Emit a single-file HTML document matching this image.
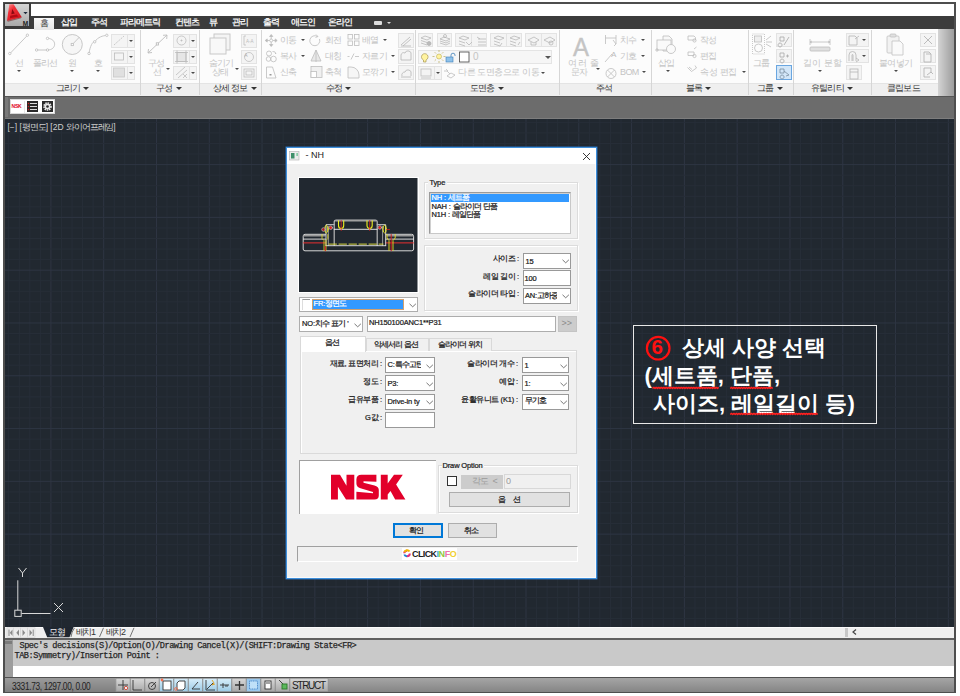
<!DOCTYPE html>
<html><head><meta charset="utf-8">
<style>
*{box-sizing:border-box}
body{margin:0;width:960px;height:696px;background:#fff;position:relative;overflow:hidden;font-family:"Liberation Sans",sans-serif;font-size:9px;color:#000}
.a{position:absolute}
.t{position:absolute;white-space:nowrap;line-height:1}
.tab{color:#fff;font-size:9px;top:18px;letter-spacing:-0.9px;-webkit-text-stroke:0.25px #fff}
.lt{color:#c4c4c4;font-size:9px;letter-spacing:-0.6px}
.pl{color:#3a3a3a;font-size:9px;top:84px;letter-spacing:-0.8px}
.pa{position:absolute;width:0;height:0;border-left:3px solid transparent;border-right:3px solid transparent;border-top:3.5px solid #333;top:86.8px}
.arr{position:absolute;width:0;height:0;border-left:2px solid transparent;border-right:2px solid transparent;border-top:2.5px solid #4a4a4a}
.sb{position:absolute;background:#f4f4f4;border:1px solid #e3e3e3}
.sep{position:absolute;top:30px;width:1px;height:65px;background:#d6d6d6}
.cb{position:absolute;background:#fff;border:1px solid #999}
.gb{position:absolute;border:1px solid #dcdcdc;box-shadow:inset 1px 1px 0 #fff,1px 1px 0 #fff}
.chev{position:absolute;width:5px;height:5px;border-right:1px solid #333;border-bottom:1px solid #333;transform:rotate(45deg)}
.dl{color:#1a1a1a;font-size:8px;letter-spacing:-0.9px;-webkit-text-stroke-width:0.22px}
.k{font-size:8px;letter-spacing:-0.9px}
.dr .k{letter-spacing:-0.55px}
.l{font-size:7.5px;letter-spacing:-0.15px}
.dr{position:absolute;white-space:nowrap;line-height:1;color:#1a1a1a;font-size:8px;letter-spacing:-0.6px;text-align:right;-webkit-text-stroke-width:0.22px}
</style></head><body>

<div class="a" style="left:3px;top:2px;width:952.5px;height:691px;background:#4e4e4e"></div>
<div class="a" style="left:30px;top:3.5px;width:924px;height:12.5px;background:#fff"></div>
<div class="a" style="left:4.5px;top:16px;width:949.5px;height:13px;background:#3c3c3c"></div>
<div class="a" style="left:4.5px;top:3.5px;width:25.5px;height:24px;background:linear-gradient(#d8d8d8,#a0a0a0);border-right:1px solid #666;border-bottom:1px solid #444"></div>
<div class="a" style="left:4.5px;top:29px;width:949.5px;height:66.5px;background:#fcfcfc"></div>
<div class="a" style="left:4.5px;top:82.5px;width:933px;height:13px;background:#efefef;border-top:1px solid #e4e4e4"></div>
<div class="a" style="left:937.5px;top:29px;width:16.5px;height:66.5px;background:linear-gradient(90deg,#d4d4d4,#9c9c9c)"></div>
<div class="a" style="left:4.5px;top:95.5px;width:949.5px;height:23px;background:#6c6c6c;border-top:1px solid #555;border-bottom:1px solid #7d7d7d"></div>
<svg class="a" style="left:4.5px;top:118.5px" width="949.5" height="508"><rect width="949.5" height="508" fill="#212830"/><line x1="3.67" y1="0" x2="3.67" y2="508" stroke="#272e38" stroke-width="1"/><line x1="14.23" y1="0" x2="14.23" y2="508" stroke="#272e38" stroke-width="1"/><line x1="24.78" y1="0" x2="24.78" y2="508" stroke="#272e38" stroke-width="1"/><line x1="35.34" y1="0" x2="35.34" y2="508" stroke="#272e38" stroke-width="1"/><line x1="45.90" y1="0" x2="45.90" y2="508" stroke="#2e3543" stroke-width="1"/><line x1="56.46" y1="0" x2="56.46" y2="508" stroke="#272e38" stroke-width="1"/><line x1="67.02" y1="0" x2="67.02" y2="508" stroke="#272e38" stroke-width="1"/><line x1="77.57" y1="0" x2="77.57" y2="508" stroke="#272e38" stroke-width="1"/><line x1="88.13" y1="0" x2="88.13" y2="508" stroke="#272e38" stroke-width="1"/><line x1="98.69" y1="0" x2="98.69" y2="508" stroke="#2e3543" stroke-width="1"/><line x1="109.25" y1="0" x2="109.25" y2="508" stroke="#272e38" stroke-width="1"/><line x1="119.81" y1="0" x2="119.81" y2="508" stroke="#272e38" stroke-width="1"/><line x1="130.36" y1="0" x2="130.36" y2="508" stroke="#272e38" stroke-width="1"/><line x1="140.92" y1="0" x2="140.92" y2="508" stroke="#272e38" stroke-width="1"/><line x1="151.48" y1="0" x2="151.48" y2="508" stroke="#2e3543" stroke-width="1"/><line x1="162.04" y1="0" x2="162.04" y2="508" stroke="#272e38" stroke-width="1"/><line x1="172.60" y1="0" x2="172.60" y2="508" stroke="#272e38" stroke-width="1"/><line x1="183.15" y1="0" x2="183.15" y2="508" stroke="#272e38" stroke-width="1"/><line x1="193.71" y1="0" x2="193.71" y2="508" stroke="#272e38" stroke-width="1"/><line x1="204.27" y1="0" x2="204.27" y2="508" stroke="#2e3543" stroke-width="1"/><line x1="214.83" y1="0" x2="214.83" y2="508" stroke="#272e38" stroke-width="1"/><line x1="225.39" y1="0" x2="225.39" y2="508" stroke="#272e38" stroke-width="1"/><line x1="235.94" y1="0" x2="235.94" y2="508" stroke="#272e38" stroke-width="1"/><line x1="246.50" y1="0" x2="246.50" y2="508" stroke="#272e38" stroke-width="1"/><line x1="257.06" y1="0" x2="257.06" y2="508" stroke="#2e3543" stroke-width="1"/><line x1="267.62" y1="0" x2="267.62" y2="508" stroke="#272e38" stroke-width="1"/><line x1="278.18" y1="0" x2="278.18" y2="508" stroke="#272e38" stroke-width="1"/><line x1="288.73" y1="0" x2="288.73" y2="508" stroke="#272e38" stroke-width="1"/><line x1="299.29" y1="0" x2="299.29" y2="508" stroke="#272e38" stroke-width="1"/><line x1="309.85" y1="0" x2="309.85" y2="508" stroke="#2e3543" stroke-width="1"/><line x1="320.41" y1="0" x2="320.41" y2="508" stroke="#272e38" stroke-width="1"/><line x1="330.97" y1="0" x2="330.97" y2="508" stroke="#272e38" stroke-width="1"/><line x1="341.52" y1="0" x2="341.52" y2="508" stroke="#272e38" stroke-width="1"/><line x1="352.08" y1="0" x2="352.08" y2="508" stroke="#272e38" stroke-width="1"/><line x1="362.64" y1="0" x2="362.64" y2="508" stroke="#2e3543" stroke-width="1"/><line x1="373.20" y1="0" x2="373.20" y2="508" stroke="#272e38" stroke-width="1"/><line x1="383.76" y1="0" x2="383.76" y2="508" stroke="#272e38" stroke-width="1"/><line x1="394.31" y1="0" x2="394.31" y2="508" stroke="#272e38" stroke-width="1"/><line x1="404.87" y1="0" x2="404.87" y2="508" stroke="#272e38" stroke-width="1"/><line x1="415.43" y1="0" x2="415.43" y2="508" stroke="#2e3543" stroke-width="1"/><line x1="425.99" y1="0" x2="425.99" y2="508" stroke="#272e38" stroke-width="1"/><line x1="436.55" y1="0" x2="436.55" y2="508" stroke="#272e38" stroke-width="1"/><line x1="447.10" y1="0" x2="447.10" y2="508" stroke="#272e38" stroke-width="1"/><line x1="457.66" y1="0" x2="457.66" y2="508" stroke="#272e38" stroke-width="1"/><line x1="468.22" y1="0" x2="468.22" y2="508" stroke="#2e3543" stroke-width="1"/><line x1="478.78" y1="0" x2="478.78" y2="508" stroke="#272e38" stroke-width="1"/><line x1="489.34" y1="0" x2="489.34" y2="508" stroke="#272e38" stroke-width="1"/><line x1="499.89" y1="0" x2="499.89" y2="508" stroke="#272e38" stroke-width="1"/><line x1="510.45" y1="0" x2="510.45" y2="508" stroke="#272e38" stroke-width="1"/><line x1="521.01" y1="0" x2="521.01" y2="508" stroke="#2e3543" stroke-width="1"/><line x1="531.57" y1="0" x2="531.57" y2="508" stroke="#272e38" stroke-width="1"/><line x1="542.13" y1="0" x2="542.13" y2="508" stroke="#272e38" stroke-width="1"/><line x1="552.68" y1="0" x2="552.68" y2="508" stroke="#272e38" stroke-width="1"/><line x1="563.24" y1="0" x2="563.24" y2="508" stroke="#272e38" stroke-width="1"/><line x1="573.80" y1="0" x2="573.80" y2="508" stroke="#2e3543" stroke-width="1"/><line x1="584.36" y1="0" x2="584.36" y2="508" stroke="#272e38" stroke-width="1"/><line x1="594.92" y1="0" x2="594.92" y2="508" stroke="#272e38" stroke-width="1"/><line x1="605.47" y1="0" x2="605.47" y2="508" stroke="#272e38" stroke-width="1"/><line x1="616.03" y1="0" x2="616.03" y2="508" stroke="#272e38" stroke-width="1"/><line x1="626.59" y1="0" x2="626.59" y2="508" stroke="#2e3543" stroke-width="1"/><line x1="637.15" y1="0" x2="637.15" y2="508" stroke="#272e38" stroke-width="1"/><line x1="647.71" y1="0" x2="647.71" y2="508" stroke="#272e38" stroke-width="1"/><line x1="658.26" y1="0" x2="658.26" y2="508" stroke="#272e38" stroke-width="1"/><line x1="668.82" y1="0" x2="668.82" y2="508" stroke="#272e38" stroke-width="1"/><line x1="679.38" y1="0" x2="679.38" y2="508" stroke="#2e3543" stroke-width="1"/><line x1="689.94" y1="0" x2="689.94" y2="508" stroke="#272e38" stroke-width="1"/><line x1="700.50" y1="0" x2="700.50" y2="508" stroke="#272e38" stroke-width="1"/><line x1="711.05" y1="0" x2="711.05" y2="508" stroke="#272e38" stroke-width="1"/><line x1="721.61" y1="0" x2="721.61" y2="508" stroke="#272e38" stroke-width="1"/><line x1="732.17" y1="0" x2="732.17" y2="508" stroke="#2e3543" stroke-width="1"/><line x1="742.73" y1="0" x2="742.73" y2="508" stroke="#272e38" stroke-width="1"/><line x1="753.29" y1="0" x2="753.29" y2="508" stroke="#272e38" stroke-width="1"/><line x1="763.84" y1="0" x2="763.84" y2="508" stroke="#272e38" stroke-width="1"/><line x1="774.40" y1="0" x2="774.40" y2="508" stroke="#272e38" stroke-width="1"/><line x1="784.96" y1="0" x2="784.96" y2="508" stroke="#2e3543" stroke-width="1"/><line x1="795.52" y1="0" x2="795.52" y2="508" stroke="#272e38" stroke-width="1"/><line x1="806.08" y1="0" x2="806.08" y2="508" stroke="#272e38" stroke-width="1"/><line x1="816.63" y1="0" x2="816.63" y2="508" stroke="#272e38" stroke-width="1"/><line x1="827.19" y1="0" x2="827.19" y2="508" stroke="#272e38" stroke-width="1"/><line x1="837.75" y1="0" x2="837.75" y2="508" stroke="#2e3543" stroke-width="1"/><line x1="848.31" y1="0" x2="848.31" y2="508" stroke="#272e38" stroke-width="1"/><line x1="858.87" y1="0" x2="858.87" y2="508" stroke="#272e38" stroke-width="1"/><line x1="869.42" y1="0" x2="869.42" y2="508" stroke="#272e38" stroke-width="1"/><line x1="879.98" y1="0" x2="879.98" y2="508" stroke="#272e38" stroke-width="1"/><line x1="890.54" y1="0" x2="890.54" y2="508" stroke="#2e3543" stroke-width="1"/><line x1="901.10" y1="0" x2="901.10" y2="508" stroke="#272e38" stroke-width="1"/><line x1="911.66" y1="0" x2="911.66" y2="508" stroke="#272e38" stroke-width="1"/><line x1="922.21" y1="0" x2="922.21" y2="508" stroke="#272e38" stroke-width="1"/><line x1="932.77" y1="0" x2="932.77" y2="508" stroke="#272e38" stroke-width="1"/><line x1="943.33" y1="0" x2="943.33" y2="508" stroke="#2e3543" stroke-width="1"/><line x1="0" y1="3.37" x2="949.5" y2="3.37" stroke="#272e38" stroke-width="1"/><line x1="0" y1="13.93" x2="949.5" y2="13.93" stroke="#272e38" stroke-width="1"/><line x1="0" y1="24.48" x2="949.5" y2="24.48" stroke="#272e38" stroke-width="1"/><line x1="0" y1="35.04" x2="949.5" y2="35.04" stroke="#272e38" stroke-width="1"/><line x1="0" y1="45.60" x2="949.5" y2="45.60" stroke="#2e3543" stroke-width="1"/><line x1="0" y1="56.16" x2="949.5" y2="56.16" stroke="#272e38" stroke-width="1"/><line x1="0" y1="66.72" x2="949.5" y2="66.72" stroke="#272e38" stroke-width="1"/><line x1="0" y1="77.27" x2="949.5" y2="77.27" stroke="#272e38" stroke-width="1"/><line x1="0" y1="87.83" x2="949.5" y2="87.83" stroke="#272e38" stroke-width="1"/><line x1="0" y1="98.39" x2="949.5" y2="98.39" stroke="#2e3543" stroke-width="1"/><line x1="0" y1="108.95" x2="949.5" y2="108.95" stroke="#272e38" stroke-width="1"/><line x1="0" y1="119.51" x2="949.5" y2="119.51" stroke="#272e38" stroke-width="1"/><line x1="0" y1="130.06" x2="949.5" y2="130.06" stroke="#272e38" stroke-width="1"/><line x1="0" y1="140.62" x2="949.5" y2="140.62" stroke="#272e38" stroke-width="1"/><line x1="0" y1="151.18" x2="949.5" y2="151.18" stroke="#2e3543" stroke-width="1"/><line x1="0" y1="161.74" x2="949.5" y2="161.74" stroke="#272e38" stroke-width="1"/><line x1="0" y1="172.30" x2="949.5" y2="172.30" stroke="#272e38" stroke-width="1"/><line x1="0" y1="182.85" x2="949.5" y2="182.85" stroke="#272e38" stroke-width="1"/><line x1="0" y1="193.41" x2="949.5" y2="193.41" stroke="#272e38" stroke-width="1"/><line x1="0" y1="203.97" x2="949.5" y2="203.97" stroke="#2e3543" stroke-width="1"/><line x1="0" y1="214.53" x2="949.5" y2="214.53" stroke="#272e38" stroke-width="1"/><line x1="0" y1="225.09" x2="949.5" y2="225.09" stroke="#272e38" stroke-width="1"/><line x1="0" y1="235.64" x2="949.5" y2="235.64" stroke="#272e38" stroke-width="1"/><line x1="0" y1="246.20" x2="949.5" y2="246.20" stroke="#272e38" stroke-width="1"/><line x1="0" y1="256.76" x2="949.5" y2="256.76" stroke="#2e3543" stroke-width="1"/><line x1="0" y1="267.32" x2="949.5" y2="267.32" stroke="#272e38" stroke-width="1"/><line x1="0" y1="277.88" x2="949.5" y2="277.88" stroke="#272e38" stroke-width="1"/><line x1="0" y1="288.43" x2="949.5" y2="288.43" stroke="#272e38" stroke-width="1"/><line x1="0" y1="298.99" x2="949.5" y2="298.99" stroke="#272e38" stroke-width="1"/><line x1="0" y1="309.55" x2="949.5" y2="309.55" stroke="#2e3543" stroke-width="1"/><line x1="0" y1="320.11" x2="949.5" y2="320.11" stroke="#272e38" stroke-width="1"/><line x1="0" y1="330.67" x2="949.5" y2="330.67" stroke="#272e38" stroke-width="1"/><line x1="0" y1="341.22" x2="949.5" y2="341.22" stroke="#272e38" stroke-width="1"/><line x1="0" y1="351.78" x2="949.5" y2="351.78" stroke="#272e38" stroke-width="1"/><line x1="0" y1="362.34" x2="949.5" y2="362.34" stroke="#2e3543" stroke-width="1"/><line x1="0" y1="372.90" x2="949.5" y2="372.90" stroke="#272e38" stroke-width="1"/><line x1="0" y1="383.46" x2="949.5" y2="383.46" stroke="#272e38" stroke-width="1"/><line x1="0" y1="394.01" x2="949.5" y2="394.01" stroke="#272e38" stroke-width="1"/><line x1="0" y1="404.57" x2="949.5" y2="404.57" stroke="#272e38" stroke-width="1"/><line x1="0" y1="415.13" x2="949.5" y2="415.13" stroke="#2e3543" stroke-width="1"/><line x1="0" y1="425.69" x2="949.5" y2="425.69" stroke="#272e38" stroke-width="1"/><line x1="0" y1="436.25" x2="949.5" y2="436.25" stroke="#272e38" stroke-width="1"/><line x1="0" y1="446.80" x2="949.5" y2="446.80" stroke="#272e38" stroke-width="1"/><line x1="0" y1="457.36" x2="949.5" y2="457.36" stroke="#272e38" stroke-width="1"/><line x1="0" y1="467.92" x2="949.5" y2="467.92" stroke="#2e3543" stroke-width="1"/><line x1="0" y1="478.48" x2="949.5" y2="478.48" stroke="#272e38" stroke-width="1"/><line x1="0" y1="489.04" x2="949.5" y2="489.04" stroke="#272e38" stroke-width="1"/><line x1="0" y1="499.59" x2="949.5" y2="499.59" stroke="#272e38" stroke-width="1"/></svg>
<div class="a" style="left:4.5px;top:626.5px;width:949.5px;height:11px;background:#efefef"></div>
<div class="a" style="left:4.5px;top:637.5px;width:949.5px;height:2.5px;background:#606060"></div>
<div class="a" style="left:4.5px;top:640px;width:949.5px;height:25.5px;background:#c9c9c9"></div>
<div class="a" style="left:13px;top:665.5px;width:941px;height:11.5px;background:#fff"></div>
<div class="a" style="left:4.5px;top:640px;width:8.5px;height:37px;background:#9d9d9d"></div>
<div class="a" style="left:4.5px;top:677px;width:949.5px;height:15px;background:linear-gradient(#a5a5a5,#858585);border-top:1px solid #505050"></div>
<!-- app logo -->
<div class="a" style="left:3.5px;top:2.5px;width:27.5px;height:26px;background:#3a3a3a"></div>
<div class="a" style="left:5px;top:4px;width:24px;height:21.5px;background:linear-gradient(#d6d6d6,#a9a9a9)"></div>
<svg class="a" style="left:4.5px;top:3.5px" width="26" height="25">
<defs><linearGradient id="rg" x1="0" y1="0" x2="0.8" y2="1"><stop offset="0" stop-color="#ff9a9a"/><stop offset="0.35" stop-color="#f23038"/><stop offset="1" stop-color="#d0101a"/></linearGradient></defs>
<path d="M4.3,0.3 L8.6,0.3 L16.8,13.2 L2,16.8 Z" fill="url(#rg)"/>
<path d="M2,16.8 L16.8,13.2 L15.5,14.5 L3,17.8 Z" fill="#6a1010" opacity="0.5"/>
<path d="M7.2,5 L9.8,9.6 L6.3,10.2 Z" fill="#8a0a12"/>
<path d="M5.2,11.8 L11.8,10.6 L13.3,12.6 L5,14.2 Z" fill="#b00a14"/>
<path d="M18.4,8 L22.6,8 L20.5,10.2 Z" fill="#1e2a3a"/>
</svg>
<div class="t" style="left:22.8px;top:20.5px;font-size:6.5px;font-weight:bold;color:#222">M</div>
<!-- active tab -->
<div class="a" style="left:34px;top:17.5px;width:20px;height:12px;background:linear-gradient(#f8f8f8,#e6e6e6)"></div>
<div class="t tab" style="left:39.5px;top:18.5px;color:#333;-webkit-text-stroke:0">홈</div>
<div class="t tab" style="left:61px">삽입</div>
<div class="t tab" style="left:90.5px">주석</div>
<div class="t tab" style="left:120px">파라메트릭</div>
<div class="t tab" style="left:174.5px">컨텐츠</div>
<div class="t tab" style="left:208.5px">뷰</div>
<div class="t tab" style="left:232px">관리</div>
<div class="t tab" style="left:262.5px">출력</div>
<div class="t tab" style="left:291px">애드인</div>
<div class="t tab" style="left:328px">온라인</div>
<div class="a" style="left:374px;top:20.5px;width:8px;height:4px;background:#ddd;border-radius:1px"></div>
<div class="arr" style="left:386.5px;top:22px;border-top-color:#ddd;border-left-width:2px;border-right-width:2px;border-top-width:2px"></div>
<!-- separators -->
<div class="sep" style="left:139.5px"></div>
<div class="sep" style="left:198.5px"></div>
<div class="sep" style="left:260.5px"></div>
<div class="sep" style="left:415px"></div>
<div class="sep" style="left:558.5px"></div>
<div class="sep" style="left:650.5px"></div>
<div class="sep" style="left:748px"></div>
<div class="sep" style="left:793px"></div>
<div class="sep" style="left:870.5px"></div>
<!-- panel labels -->
<div class="t pl" style="left:56px">그리기</div><div class="pa" style="left:82.5px"></div>
<div class="t pl" style="left:156px">구성</div><div class="pa" style="left:175.5px"></div>
<div class="t pl" style="left:213px">상세 정보</div><div class="pa" style="left:251.0px"></div>
<div class="t pl" style="left:326px">수정</div><div class="pa" style="left:344.5px"></div>
<div class="t pl" style="left:470px">도면층</div><div class="pa" style="left:497.5px"></div>
<div class="t pl" style="left:596px">주석</div>
<div class="t pl" style="left:686px">블록</div><div class="pa" style="left:705.0px"></div>
<div class="t pl" style="left:757px">그룹</div><div class="pa" style="left:776.5px"></div>
<div class="t pl" style="left:811px">유틸리티</div><div class="pa" style="left:846.5px"></div>
<div class="t pl" style="left:887px">클립보드</div>

<!-- 그리기 panel -->
<svg class="a" style="left:0;top:28px" width="140" height="54" fill="none" stroke="#c2c2c2" stroke-width="0.9">
<line x1="10.5" y1="25" x2="26.8" y2="8"/><circle cx="9.8" cy="25.5" r="1.2" fill="#fff"/><circle cx="27.4" cy="7.2" r="1.2" fill="#fff"/>
<path d="M36.6,22 L47.5,22 C57,22 57,10.4 47.5,10.4"/><circle cx="36.6" cy="22" r="1.2" fill="#fff"/><circle cx="47.5" cy="22" r="1.2" fill="#fff"/><circle cx="47.5" cy="10.4" r="1.2" fill="#fff"/>
<circle cx="72.3" cy="16.5" r="10" fill="#f6f6f6"/><rect x="71.2" y="15.4" width="2.2" height="2.2" fill="#fff"/><line x1="73.4" y1="15.4" x2="79.5" y2="9"/>
<path d="M89,25.5 C90,18 93,13 94.7,13.8 C98,9 103,7.5 106.8,7.5"/><circle cx="89" cy="25.5" r="1.2" fill="#fff"/><circle cx="94.7" cy="13.8" r="1.2" fill="#fff"/><circle cx="106.8" cy="7.3" r="1.2" fill="#fff"/>
</svg>
<div class="t lt" style="left:14.5px;top:58.5px">선</div>
<div class="t lt" style="left:33px;top:58.5px;letter-spacing:-1px">폴리선</div>
<div class="t lt" style="left:68px;top:58.5px">원</div>
<div class="t lt" style="left:93.5px;top:58.5px">호</div>
<div class="arr" style="left:16.5px;top:70px"></div>
<div class="arr" style="left:70px;top:70px"></div>
<div class="arr" style="left:95.5px;top:70px"></div>
<div class="sb" style="left:111px;top:33.5px;width:24px;height:14px"></div><div class="a" style="left:127px;top:34px;width:1px;height:13px;background:#e3e3e3"></div><div class="arr" style="left:129px;top:40px"></div>
<div class="sb" style="left:111px;top:49.5px;width:24px;height:14px"></div><div class="a" style="left:127px;top:50px;width:1px;height:13px;background:#e3e3e3"></div><div class="arr" style="left:129px;top:56px"></div>
<div class="sb" style="left:111px;top:65.5px;width:24px;height:14px"></div><div class="a" style="left:127px;top:66px;width:1px;height:13px;background:#e3e3e3"></div><div class="arr" style="left:129px;top:72px"></div>
<svg class="a" style="left:111px;top:33px" width="17" height="48" fill="none" stroke="#bcbcbc" stroke-width="0.8">
<line x1="3" y1="12" x2="13" y2="3" stroke-dasharray="2,1"/>
<rect x="3.5" y="20" width="9" height="7"/><rect x="2.5" y="35" width="11" height="9" fill="#e0e0e0" stroke="#c8c8c8"/>
</svg>

<!-- 구성 panel -->
<svg class="a" style="left:140px;top:28px" width="60" height="54" fill="none" stroke="#bdbdbd" stroke-width="0.9">
<line x1="8" y1="25" x2="27" y2="7"/><path d="M8,25 l0.5,-4 M8,25 l4,-0.5 M27,7 l-4,0.3 M27,7 l-0.3,4"/><rect x="16.3" y="14.8" width="2.2" height="2.2" fill="#fff"/>
</svg>
<div class="t lt" style="left:147.5px;top:58.5px;letter-spacing:-0.8px">구성</div>
<div class="t lt" style="left:152.5px;top:67.5px">선</div>
<div class="arr" style="left:166px;top:68px"></div>
<div class="sb" style="left:173px;top:33.5px;width:24px;height:14px"></div><div class="a" style="left:189px;top:34px;width:1px;height:13px;background:#e3e3e3"></div><div class="arr" style="left:191px;top:40px"></div>
<div class="sb" style="left:173px;top:49.5px;width:24px;height:14px"></div><div class="a" style="left:189px;top:50px;width:1px;height:13px;background:#e3e3e3"></div><div class="arr" style="left:191px;top:56px"></div>
<div class="sb" style="left:173px;top:65.5px;width:24px;height:14px"></div><div class="a" style="left:189px;top:66px;width:1px;height:13px;background:#e3e3e3"></div><div class="arr" style="left:191px;top:72px"></div>
<svg class="a" style="left:173px;top:33px" width="17" height="48" fill="none" stroke="#bcbcbc" stroke-width="0.8">
<circle cx="8.5" cy="7.5" r="4.5"/><circle cx="8.5" cy="7.5" r="0.6" fill="#bbb"/>
<rect x="4" y="19.5" width="9" height="9" fill="#e6e6e6"/><path d="M2,19.5h13M2,28.5h13M4,17.5v13M13,17.5v13"/>
<path d="M3,42 l9,-8 M5,45 l9,-8 M10,41 l4,4 M14,41 l-4,4"/>
</svg>

<!-- 상세 정보 panel -->
<svg class="a" style="left:199px;top:28px" width="62" height="54" fill="none" stroke="#c4c4c4" stroke-width="0.9">
<rect x="15" y="6" width="16" height="16" fill="#f4f4f4"/><rect x="11" y="10" width="16" height="16" fill="#f8f8f8"/>
</svg>
<div class="t lt" style="left:208.5px;top:58.5px;letter-spacing:-0.6px">숨기기</div>
<div class="t lt" style="left:212px;top:67.5px;letter-spacing:-0.6px">상태</div>
<div class="arr" style="left:234.5px;top:68px"></div>
<div class="sb" style="left:241px;top:33.5px;width:16px;height:14px"></div>
<div class="sb" style="left:241px;top:49.5px;width:16px;height:14px"></div>
<div class="sb" style="left:241px;top:65.5px;width:16px;height:14px"></div>
<svg class="a" style="left:241px;top:33px" width="16" height="48" fill="none" stroke="#b8b8b8" stroke-width="0.7">
<path d="M3,3v9M3,3h2M3,12h2"/><text x="5" y="10" font-size="4.5" fill="#bbb" stroke="none" font-family="Liberation Sans">A-A</text>
<circle cx="8" cy="24" r="4.5"/><text x="3.5" y="24" font-size="4.5" fill="#aaa" stroke="none" font-family="Liberation Sans">A</text>
<rect x="3" y="36" width="10" height="8"/><rect x="5" y="38" width="6" height="4"/>
</svg>

<!-- 수정 panel -->
<svg class="a" style="left:262px;top:28px" width="155" height="54" fill="none" stroke="#bdbdbd" stroke-width="0.8">
<path d="M9.2,7.5v10M4.2,12.5h10"/><path d="M9.2,6.5 l-1.6,2 h3.2z M9.2,18.5 l-1.6,-2 h3.2z M3.2,12.5 l2,-1.6 v3.2z M15.2,12.5 l-2,-1.6 v3.2z" fill="#bbb"/><circle cx="9.2" cy="12.5" r="1.5" fill="#fff"/>
<circle cx="7" cy="25.5" r="2.5"/><circle cx="6.5" cy="31" r="2.3"/><circle cx="11.5" cy="31" r="2.8"/><path d="M10.5,23.5 q3,-0.5 3.5,2.5 l-1,-1"/>
<path d="M4.5,39 h6 l3.5,11 h-9.5 z"/><rect x="7.5" y="46" width="2" height="1.5" fill="#999" stroke="none"/>
<path d="M55.5,8.5 A5,5 0 1 0 57.5,11"/><path d="M54,6.5 l2,2 l-2.5,1" />
<path d="M54,22 l-5,11 h10 z" fill="#e8e8e8"/><path d="M54,22 v12"/>
<rect x="49" y="38.5" width="11" height="11" fill="#f0f0f0"/><rect x="49" y="43.5" width="5.5" height="6" fill="#fff"/>
<rect x="86" y="6.5" width="4.5" height="4.5"/><rect x="92.5" y="6.5" width="4.5" height="4.5"/><rect x="86" y="13" width="4.5" height="4.5"/><rect x="92.5" y="13" width="4.5" height="4.5"/>
<path d="M85.5,28.5 h2 M92,25.5 l-3,6 M93,28.5 h4" />
<path d="M86,39 v11 h11 v-3 a8,8 0 0 0 -8,-8 z" fill="#f6f6f6"/>
</svg>
<div class="t lt" style="left:279.5px;top:35.5px">이동</div><div class="arr" style="left:300.5px;top:39px"></div>
<div class="t lt" style="left:279.5px;top:51.5px">복사</div><div class="arr" style="left:300.5px;top:55px"></div>
<div class="t lt" style="left:279.5px;top:67.5px">신축</div>
<div class="t lt" style="left:324.5px;top:35.5px">회전</div>
<div class="t lt" style="left:324.5px;top:51.5px">대칭</div>
<div class="t lt" style="left:324.5px;top:67.5px">축척</div>
<div class="t lt" style="left:361.5px;top:35.5px">배열</div><div class="arr" style="left:383px;top:39px"></div>
<div class="t lt" style="left:361.5px;top:51.5px;letter-spacing:-0.3px">자르기</div><div class="arr" style="left:391px;top:55px"></div>
<div class="t lt" style="left:361.5px;top:67.5px;letter-spacing:-0.3px">모깎기</div><div class="arr" style="left:391px;top:71px"></div>
<div class="sb" style="left:398px;top:33px;width:15.5px;height:15px"></div>
<div class="sb" style="left:398px;top:49px;width:15.5px;height:15px"></div>
<div class="sb" style="left:398px;top:65px;width:15.5px;height:15px"></div>
<svg class="a" style="left:398px;top:33px" width="16" height="48" fill="none" stroke="#b5b5b5" stroke-width="0.8">
<path d="M3,12 l9,-8 M5,13 l8,-7 M3,13 h10"/><path d="M3,22 a3,3 0 0 1 4,-2 a3,3 0 0 1 6,2 v5 h-10 z"/><path d="M3,44 h10 M4,43 a3,3 0 0 1 3,-4 a3,3 0 0 1 6,2 v2"/>
</svg>

<!-- 도면층 panel -->
<div class="sb" style="left:418px;top:33px;width:15px;height:14px"></div>
<div class="sb" style="left:436.5px;top:33px;width:15.5px;height:14px"></div>
<div class="sb" style="left:455px;top:33px;width:32px;height:14px"></div><div class="a" style="left:471px;top:34px;width:1px;height:12px;background:#e3e3e3"></div>
<div class="sb" style="left:490px;top:33px;width:32px;height:14px"></div><div class="a" style="left:506px;top:34px;width:1px;height:12px;background:#e3e3e3"></div>
<div class="sb" style="left:525px;top:33px;width:32px;height:14px"></div><div class="a" style="left:541px;top:34px;width:1px;height:12px;background:#e3e3e3"></div>
<svg class="a" style="left:418px;top:33px" width="140" height="14" fill="none" stroke="#b0b0b0" stroke-width="0.7">
<path d="M3,5 l4,-2 l6,2 l-4,2 z M3,7.5 l6,2 M3,10 l6,2"/><circle cx="11" cy="10.5" r="2" fill="#bbb"/>
<path d="M22,6 l4,-2 l6,2 l-4,2 z M22,8 l6,2 l4,-2 M22,10 l6,2 l4,-2"/><circle cx="27" cy="3" r="1.5"/>
<path d="M41,5 l4,-2 l6,2 l-4,2 z M41,8 l6,2 M41,11 l6,2"/><path d="M48,9 l3,3 l3,-3"/>
<path d="M59,4 l3,2 M60,6 h8 M60,9 h8 M60,12 h8"/>
<path d="M76,5 l4,-2 l6,2 l-4,2 z M76,8 l6,2 M76,11 l6,2"/><path d="M84,10 l-2,3"/>
<path d="M92,5 l4,-2 l6,2 l-4,2 z M92,8 l6,2 M92,11 l6,2"/><path d="M100,12 l2,-3"/>
<path d="M110,7 l6,-3 l5,3 l-5,3 z"/><path d="M113,9 v3 h5 v-3"/>
<path d="M126,7 l6,-3 l5,3 l-5,3 z"/><circle cx="133" cy="10" r="2"/>
</svg>
<div class="a" style="left:418px;top:49.5px;width:134px;height:14.5px;background:#f6f6f6;border:1px solid #e4e4e4"></div>
<svg class="a" style="left:418px;top:49px" width="134" height="16">
<path d="M5.5,11 a3.3,3.3 0 1 1 2.5,0 v2 h-2.5 z" fill="#fff3a0" stroke="#9c8a40" stroke-width="0.6"/>
<circle cx="21" cy="7.5" r="2.5" fill="#fff3a0" stroke="#b0a040" stroke-width="0.5"/><path d="M21,3v-2M21,12v2M16.5,7.5h-2M25.5,7.5h2M18,4.5l-1.3,-1.3M24,10.5l1.3,1.3M18,10.5l-1.3,1.3M24,4.5l1.3,-1.3" stroke="#b0a040" stroke-width="0.6"/>
<rect x="28" y="8" width="7" height="5" fill="#8ec1ea" stroke="#3f7fb8" stroke-width="0.6"/><path d="M33,8 v-1.8 a2,2 0 0 1 4,0 v0.8" fill="none" stroke="#3f7fb8" stroke-width="0.8"/>
<rect x="41.5" y="3" width="9.5" height="10" fill="#fff" stroke="#555" stroke-width="0.9"/>
</svg>
<div class="t" style="left:473px;top:51.5px;font-size:10px;color:#c4c4c4">0</div>
<div class="arr" style="left:545px;top:55.5px;border-top-color:#555;border-left-width:3px;border-right-width:3px;border-top-width:3.5px"></div>
<div class="sb" style="left:418px;top:65.5px;width:24px;height:14.5px"></div><div class="a" style="left:433.5px;top:66px;width:1px;height:13px;background:#e3e3e3"></div><div class="arr" style="left:436px;top:72px"></div>
<svg class="a" style="left:418px;top:65px" width="40" height="16" fill="none" stroke="#bdbdbd" stroke-width="0.8">
<rect x="3" y="4" width="10" height="7"/><path d="M3,13 h10"/>
<path d="M28,4 l2,2 M26,6 h3 l3,3 M29,11 l4,-3 l4,2 l-4,3 z"/>
</svg>
<div class="t lt" style="left:458px;top:67.5px;letter-spacing:-0.45px">다른 도면층으로 이동</div>
<div class="arr" style="left:541px;top:72px;border-left-width:2px;border-right-width:2px;border-top-width:2.5px"></div>

<!-- 주석 panel -->
<div class="t" style="left:572.5px;top:33.5px;font-size:26px;color:#c4c4c4;transform:scaleX(0.92);transform-origin:left;-webkit-text-stroke:0.4px #c4c4c4">A</div>
<div class="t lt" style="left:568px;top:58.5px;letter-spacing:0.5px">여러 줄</div>
<div class="t lt" style="left:571px;top:67.5px">문자</div>
<div class="arr" style="left:596px;top:68px"></div>
<svg class="a" style="left:603px;top:33px" width="16" height="48" fill="none" stroke="#bdbdbd" stroke-width="0.8">
<path d="M2.5,2v9M13,2v9M2.5,5h10.5M10,7 l3,4 l-2,2"/>
<path d="M2,29 l7,-8"/><text x="8" y="24" font-size="8" fill="#bbb" stroke="none" font-family="Liberation Sans">A</text>
<circle cx="8" cy="40.5" r="5"/><path d="M4.5,37 l7,7 M11.5,37 l-7,7"/>
</svg>
<div class="t lt" style="left:620px;top:35.5px">치수</div><div class="arr" style="left:640.5px;top:39px"></div>
<div class="t lt" style="left:620px;top:51.5px">기호</div><div class="arr" style="left:640.5px;top:55px"></div>
<div class="t lt" style="left:620px;top:68px;font-size:9px">BOM</div><div class="arr" style="left:642px;top:71px"></div>

<!-- 블록 panel -->
<svg class="a" style="left:652px;top:28px" width="96" height="54" fill="none" stroke="#bdbdbd" stroke-width="0.8">
<path d="M11,8 h6 l3,3 v12 h-9 z" fill="#f8f8f8"/><rect x="5" y="12" width="14" height="10" fill="#fafafa"/><circle cx="19" cy="21" r="4.5" fill="#fafafa"/><circle cx="5" cy="22" r="1.2"/>
<path d="M36,8 h6 l1.5,1.5 v2.5 h-7.5 z"/><circle cx="42.5" cy="12.5" r="1.6"/>
<path d="M36,24 h6 v3.5 h-6 z M42,21 l2.5,-2"/><circle cx="42.5" cy="28" r="1.6"/>
<path d="M35.5,39.5 l4,4 l5,-3.5 l-1.5,-2.5 M37,39 l3,2.5"/>
</svg>
<div class="t lt" style="left:658px;top:58.5px">삽입</div>
<div class="arr" style="left:665.5px;top:70px"></div>
<div class="t lt" style="left:700px;top:35.5px">작성</div>
<div class="t lt" style="left:700px;top:51.5px">편집</div>
<div class="t lt" style="left:700px;top:67.5px;letter-spacing:-0.3px">속성 편집</div><div class="arr" style="left:742px;top:71px"></div>

<!-- 그룹 panel -->
<svg class="a" style="left:750px;top:28px" width="44" height="54" fill="none" stroke="#bdbdbd" stroke-width="0.8">
<rect x="2.5" y="6" width="12" height="20" stroke-dasharray="1,1"/><rect x="4.5" y="8" width="7" height="6" fill="#eee"/><circle cx="8.5" cy="20" r="4"/><path d="M16,12 l5,-4 M16,14 h6 M16,16 l5,3"/>
</svg>
<div class="t lt" style="left:753px;top:58.5px">그룹</div>
<div class="sb" style="left:776px;top:33px;width:15.5px;height:14px"></div>
<div class="sb" style="left:776px;top:49px;width:15.5px;height:14px"></div>
<div class="a" style="left:776px;top:65px;width:15.5px;height:15px;background:#d2e6f8;border:1px solid #6aa6e0"></div>
<svg class="a" style="left:776px;top:33px" width="16" height="48" fill="none" stroke="#a8a8a8" stroke-width="0.8">
<path d="M4,4 h4 v4 h-4z M4,10 a2,2 0 1 0 0.1,0 M8,12 l5,-8"/>
<path d="M4,20 h4 v4 h-4z M6,26 a2,2 0 1 0 0.1,0 M10,23 h3 M11.5,21.5 v3"/>
<path d="M4,36 h4 v4 h-4z M6,42 a2,2 0 1 0 0.1,0 M8,38 l5,4 l-3,1" stroke="#7a8ea0"/>
</svg>

<!-- 유틸리티 panel -->
<svg class="a" style="left:800px;top:28px" width="70" height="54" fill="none" stroke="#bdbdbd" stroke-width="0.8">
<path d="M10,11 v6 M30,11 v6 M10,14 h20 M10,14 l2,-1 M10,14 l2,1 M30,14 l-2,-1 M30,14 l-2,1"/>
<rect x="10" y="19" width="20" height="4" rx="1" fill="#e0e0e0"/>
</svg>
<div class="t lt" style="left:802.5px;top:58.5px;letter-spacing:0.3px">길이 분할</div>
<div class="arr" style="left:818px;top:70px"></div>
<div class="sb" style="left:846px;top:33px;width:22.5px;height:14px"></div><div class="arr" style="left:862px;top:39px"></div>
<div class="sb" style="left:846px;top:49px;width:22.5px;height:14px"></div><div class="arr" style="left:862px;top:55px"></div>
<div class="sb" style="left:846px;top:65px;width:15.5px;height:15px"></div>
<svg class="a" style="left:846px;top:33px" width="16" height="48" fill="none" stroke="#b5b5b5" stroke-width="0.8">
<path d="M3,3 h6 l2,2 v7 h-8 z M9,6 l4,-3"/><path d="M3,28 v-6 a3.5,3.5 0 0 1 7,0 v6 M6,28 v-6 a0.5,0.5 0 0 1 1,0 v6 M10,25 l3,2 l-3,2"/>
<rect x="4" y="36" width="8" height="10"/><path d="M4,39h8"/>
</svg>

<!-- 클립보드 panel -->
<svg class="a" style="left:871px;top:28px" width="66" height="54" fill="none" stroke="#c2c2c2" stroke-width="0.8">
<rect x="16" y="8" width="12" height="17" rx="1" fill="#f2f2f2"/><rect x="19" y="6" width="6" height="3" rx="1" fill="#e0e0e0"/><path d="M21,13 h8 l3,3 v11 h-11 z" fill="#fafafa"/>
</svg>
<div class="t lt" style="left:878.5px;top:58.5px;letter-spacing:-0.5px">붙여넣기</div>
<div class="arr" style="left:893.5px;top:70px"></div>
<div class="sb" style="left:920px;top:33px;width:15.5px;height:14px"></div>
<div class="sb" style="left:920px;top:49px;width:15.5px;height:14px"></div>
<div class="sb" style="left:920px;top:65px;width:15.5px;height:15px"></div>
<svg class="a" style="left:920px;top:33px" width="16" height="48" fill="none" stroke="#b5b5b5" stroke-width="0.9">
<path d="M4,3 l8,8 M12,3 l-8,8"/><path d="M4,19 h5 l2,2 v8 h-7 z M6,21 h5"/><path d="M4,35 h7 v5 M4,35 v9 h6 M7,42 l4,-3 l2,2"/>
</svg>
<!-- toolbar box -->
<div class="a" style="left:5px;top:97px;width:3px;height:20px;background:#7a7a7a"></div>
<div class="a" style="left:9.5px;top:99px;width:45.5px;height:15px;background:#fff;border:1px solid #d8d8d8"></div>
<div class="a" style="left:11px;top:100.5px;width:11px;height:12px;background:#fff"></div>
<div class="t" style="left:11.5px;top:103.5px;font-size:5px;font-weight:bold;color:#e00018;letter-spacing:-0.2px">NSK</div>
<div class="a" style="left:24px;top:100.5px;width:1px;height:12px;background:#e6e6e6"></div>
<svg class="a" style="left:26.5px;top:100.5px" width="11" height="11"><rect width="11" height="11" fill="#2a2a2a"/><path d="M3,2.5h7M3,5.5h7M3,8.5h7" stroke="#ddd" stroke-width="1.2"/><rect x="0.8" y="1.8" width="1.4" height="1.4" fill="#d02020"/><rect x="0.8" y="4.8" width="1.4" height="1.4" fill="#d02020"/><rect x="0.8" y="7.8" width="1.4" height="1.4" fill="#d02020"/></svg>
<svg class="a" style="left:42px;top:100.5px" width="11" height="11"><rect width="11" height="11" fill="#2a2a2a"/><circle cx="5.5" cy="5.5" r="3.5" fill="none" stroke="#e8e8e8" stroke-width="1.6" stroke-dasharray="1.5,0.8"/><circle cx="5.5" cy="5.5" r="3" fill="#e8e8e8"/><circle cx="5.5" cy="5.5" r="1.3" fill="#2a2a2a"/></svg>
<!-- viewport label -->
<div class="t" style="left:7.5px;top:123px;font-size:8.5px;color:#cfcfcf">[−] [<span style="letter-spacing:-1.1px">평면도</span>] [2D <span style="letter-spacing:-1.1px">와이어프레임</span>]</div>
<!-- UCS icon -->
<svg class="a" style="left:0;top:555px" width="80" height="70" fill="none" stroke="#d8d8d8" stroke-width="1">
<path d="M17.8,25.3 V55.2"/><path d="M21.5,58.5 H50.5"/><rect x="14.8" y="55.2" width="6.4" height="6.2"/>
<path d="M18.5,13 l4,5 l4,-5 M22.5,18 v4"/>
<path d="M54,48 l9,9 M63,48 l-9,9"/>
</svg>
<!-- layout tabs -->
<div class="a" style="left:4.5px;top:626.5px;width:949.5px;height:1px;background:#fafafa"></div>
<svg class="a" style="left:4.5px;top:626.5px" width="140" height="11">
<g fill="#ececec" stroke="#d2d2d2" stroke-width="0.6"><rect x="2" y="0.8" width="6.5" height="9.5"/><rect x="8.5" y="0.8" width="7" height="9.5"/><rect x="15.5" y="0.8" width="7" height="9.5"/><rect x="22.5" y="0.8" width="7.5" height="9.5"/></g>
<g fill="#8a8a8a"><rect x="3.5" y="2.5" width="1" height="6.5"/><path d="M7.5,2.5 L4.8,5.7 L7.5,9z"/><path d="M14,2.5 L11.3,5.7 L14,9z"/><path d="M17.5,2.5 L20.2,5.7 L17.5,9z"/><path d="M24.5,2.5 L27.2,5.7 L24.5,9z"/><rect x="27.7" y="2.5" width="1" height="6.5"/></g>
<path d="M37.8,-0.5 L42.2,10.3 L64.5,10.3 L68.8,-0.5 Z" fill="#1f2630"/>
<path d="M66,10 Q66.5,5 69.5,0.8 M94.5,10 L98.5,0.8 M125,10 L129,0.8" stroke="#555" stroke-width="0.8" fill="none"/>
</svg>
<div class="t" style="left:48.5px;top:627.5px;font-size:9px;color:#f0f0f0;letter-spacing:-0.8px">모형</div>
<div class="t" style="left:75.5px;top:627.5px;font-size:9px;color:#333;letter-spacing:-1.2px">배치1</div>
<div class="t" style="left:105.5px;top:627.5px;font-size:9px;color:#333;letter-spacing:-1.2px">배치2</div>
<div class="a" style="left:844.5px;top:627.5px;width:3.5px;height:9px;background:#c8c8c8"></div>
<svg class="a" style="left:851px;top:628px" width="8" height="8"><path d="M5,1.5 L2,4 L5,6.5" fill="none" stroke="#444" stroke-width="1.2"/></svg>
<!-- command text -->
<div class="a" style="left:5px;top:641px;width:7px;height:3px;background:#7c7c7c"></div>
<div class="t" style="left:19.5px;top:641px;font-family:'Liberation Mono',monospace;font-size:8.6px;letter-spacing:-0.48px;color:#262626;line-height:10px;-webkit-text-stroke:0.25px #262626">Spec's decisions(S)/Option(O)/Drawing Cancel(X)/(SHIFT:Drawing State&lt;FR&gt;</div>
<div class="t" style="left:14.5px;top:651px;font-family:'Liberation Mono',monospace;font-size:8.6px;letter-spacing:-0.48px;color:#262626;line-height:10px;-webkit-text-stroke:0.25px #262626">TAB:Symmetry)/Insertion Point :</div>
<!-- status bar -->
<div class="a" style="left:5px;top:678px;width:110px;height:14px;background:linear-gradient(#9b9b9b,#7f7f7f)"></div>
<div class="t" style="left:12px;top:680.5px;font-size:9.5px;color:#222;letter-spacing:-0.4px;transform:scale(0.88,1.1);transform-origin:left top">3331.73, 1297.00, 0.00</div>
<svg class="a" style="left:115px;top:678px" width="215" height="14">
<defs><linearGradient id="sg" x1="0" y1="0" x2="0" y2="1"><stop offset="0" stop-color="#d8d8d8"/><stop offset="1" stop-color="#a8a8a8"/></linearGradient>
<linearGradient id="sb" x1="0" y1="0" x2="0" y2="1"><stop offset="0" stop-color="#d8eefa"/><stop offset="1" stop-color="#9ccbe6"/></linearGradient></defs>
<g stroke="#8a8a8a" stroke-width="0.5">
<rect x="1" y="0.5" width="14" height="13" fill="url(#sg)"/>
<rect x="15.5" y="0.5" width="14" height="13" fill="url(#sg)"/>
<rect x="30" y="0.5" width="14" height="13" fill="url(#sg)"/>
<rect x="44.5" y="0.5" width="14" height="13" fill="url(#sb)"/>
<rect x="59" y="0.5" width="14" height="13" fill="url(#sb)"/>
<rect x="73.5" y="0.5" width="14" height="13" fill="url(#sb)"/>
<rect x="88" y="0.5" width="14" height="13" fill="url(#sb)"/>
<rect x="102.5" y="0.5" width="14" height="13" fill="url(#sb)"/>
<rect x="117" y="0.5" width="14" height="13" fill="url(#sg)"/>
<rect x="131.5" y="0.5" width="14" height="13" fill="#9cc9ee"/>
<rect x="146" y="0.5" width="14" height="13" fill="url(#sg)"/>
<rect x="160.5" y="0.5" width="14" height="13" fill="url(#sg)"/>
<rect x="175" y="0.5" width="38" height="13" fill="url(#sg)"/>
</g>
<g fill="none" stroke="#333" stroke-width="0.9">
<path d="M3,7h10M8,2v10"/><circle cx="11" cy="10" r="1.6" stroke="#d04030" fill="#fff"/>
<path d="M18,2v10h9"/>
<circle cx="37" cy="8" r="3.5"/><path d="M36,9l5,-5"/>
<rect x="48" y="3" width="8" height="9" fill="#fff"/><circle cx="47" cy="2" r="1.4" fill="#f07050" stroke="none"/>
<path d="M62,5 l2,-2 h6 v7 l-2,2 h-6 z" fill="#fff"/><circle cx="61" cy="11" r="1.4" fill="none" stroke="#f07050"/>
<path d="M77,11 l6,-7 M77,11 h8"/>
<path d="M91,2 v10 h9 M92,11 l6,-6" /><path d="M97,2 l2,3 l-2,2 l3,-1" stroke="#e0a020"/>
<path d="M105,7 h9 M108,5 v5 M110,8 h3"/>
<path d="M120,7 h9 M124.5,3 v9" stroke-width="1.3"/>
<rect x="134.5" y="3" width="8" height="8" fill="#bfe0f8" stroke="#3c7fc4" stroke-dasharray="1,0.7"/>
<rect x="150" y="3" width="6" height="8" fill="#fff"/><path d="M151,5h4"/>
<path d="M164,2 l4,4"/><rect x="167" y="6" width="5" height="5" fill="#5cb85c" stroke="#2a7a2a"/>
</g>
<text x="177" y="11" font-family="Liberation Sans" font-size="10" fill="#222" textLength="34">STRUCT</text>
</svg>
<!-- dialog frame -->
<div class="a" style="left:286px;top:147px;width:311px;height:432px;background:#f0f0f0;border:1px solid #3d8fdc;box-shadow:0 0 0 0.5px #2a6fb8"></div>
<div class="a" style="left:287px;top:148px;width:309px;height:16px;background:#fff"></div>
<div class="a" style="left:595px;top:164px;width:1px;height:414px;background:#fafafa"></div>
<div class="a" style="left:287px;top:577px;width:309px;height:1px;background:#fafafa"></div>
<!-- title icon -->
<svg class="a" style="left:288.5px;top:150.5px" width="11" height="10"><rect x="0.5" y="0.5" width="9.5" height="8.5" fill="#ececec" stroke="#b0b0b0" stroke-width="0.6"/><rect x="2" y="2" width="3.5" height="5.5" fill="#3f8f6a"/><rect x="7.5" y="2" width="1.2" height="3" fill="#5fbf8a"/></svg>
<div class="t" style="left:305.5px;top:150.8px;font-size:9px;color:#222">- NH</div>
<svg class="a" style="left:582px;top:151.5px" width="9" height="9"><path d="M1,1 L8,8 M8,1 L1,8" stroke="#222" stroke-width="0.9"/></svg>

<!-- preview -->
<div class="a" style="left:298px;top:176.5px;width:120.5px;height:116.5px;background:#fff"></div>
<svg class="a" style="left:299px;top:177.5px" width="118.5" height="114.5">
<rect width="118.5" height="114.5" fill="#212830"/>
<g transform="translate(-299,-177.5)" fill="none" stroke-linecap="round">
<!-- rail -->
<path d="M325.5,233.8 H305 a1.8,1.8 0 0 0 -1.8,1.8 V248.5 a1.8,1.8 0 0 0 1.8,1.8 H411.8 a1.8,1.8 0 0 0 1.8,-1.8 V235.6 a1.8,1.8 0 0 0 -1.8,-1.8 H386" stroke="#d8d8d8" stroke-width="1"/>
<path d="M304,235.2 H325 M387,235.2 H413" stroke="#9a9a9a" stroke-width="1.6"/>
<path d="M303.5,238.6 H325.5 M386,238.6 H413.5" stroke="#f0f0f0" stroke-width="0.9"/>
<path d="M303.5,242.4 H325.5 M386,242.4 H413.5" stroke="#ff3030" stroke-width="0.9"/>
<!-- block -->
<path d="M326,245 V224.2 H334.2 M385.7,245 V224.2 H377.2" stroke="#e8e8e8" stroke-width="0.9"/>
<path d="M328.3,226 V245 M382.6,226 V245" stroke="#a8a8a8" stroke-width="0.9"/>
<path d="M334.2,245 V221.5 a2,2 0 0 1 2,-2 H375.2 a2,2 0 0 1 2,2 V245" stroke="#b8b8b8" stroke-width="1.2"/>
<path d="M335.5,220.3 H376" stroke="#a0a0a0" stroke-width="1.6"/>
<path d="M334.2,228.8 H377.2" stroke="#f4f4f4" stroke-width="0.9"/>
<path d="M326,245.2 H385.7" stroke="#e8e8e8" stroke-width="0.9"/>
<path d="M329,243.6 H383" stroke="#d8d840" stroke-width="1" stroke-dasharray="7.5,2.5"/>
<!-- top U bolts -->
<path d="M338.5,220.3 V225 a2.6,3 0 0 0 5.2,0 V220.3 M367,220.3 V225 a2.6,3 0 0 0 5.2,0 V220.3" stroke="#f0f020" stroke-width="1.1"/>
<path d="M341.2,220 V230 M369.7,220 V230" stroke="#e02020" stroke-width="0.8"/>
<!-- seals -->
<ellipse cx="326.4" cy="228.6" rx="1.6" ry="3.8" stroke="#f0f020" stroke-width="1"/>
<ellipse cx="384.6" cy="228.6" rx="1.6" ry="3.8" stroke="#f0f020" stroke-width="1"/>
<circle cx="323.5" cy="229" r="1.8" stroke="#b8b8b8" stroke-width="0.7" fill="#b01818"/>
<circle cx="330.7" cy="227.2" r="1.8" stroke="#b8b8b8" stroke-width="0.7" fill="#e02020"/>
<circle cx="379.8" cy="227" r="1.8" stroke="#b8b8b8" stroke-width="0.7" fill="#e02020"/>
<path d="M386.5,229 H389.5" stroke="#e02020" stroke-width="0.7"/>
<!-- side bolts -->
<path d="M322,234 V238 L324,240 V250 M327.8,234 V238 L326,240 V250" stroke="#e8e020" stroke-width="0.8"/>
<path d="M325.3,246 V250.3" stroke="#e02020" stroke-width="1"/>
<path d="M387,234 V237.5 L389,240 V250 M395.2,234 V237.5 L393,240 V250" stroke="#e8e020" stroke-width="0.9"/>
<path d="M391.2,234 V250.3" stroke="#d02020" stroke-width="1"/>
</g>
</svg>

<!-- FR combo -->
<div class="cb" style="left:299px;top:296.5px;width:119px;height:15.5px;border-color:#adadad"></div>
<div class="a" style="left:301.5px;top:298.5px;width:8px;height:11px;background:#fff;border-top:1px solid #999;border-left:1px solid #ddd"></div>
<div class="a" style="left:312px;top:298.5px;width:91.5px;height:11.5px;background:#3399ff;border:1px solid #d0a070"></div>
<div class="t dl" style="left:313.5px;top:300px;color:#fff;letter-spacing:-0.8px"><span class="l">FR:</span><span class="k">정면도</span></div>
<svg class="a" style="left:409.0px;top:303.0px" width="8" height="5"><path d="M0.5,0.8 L3.7,3.8 L6.9,0.8" fill="none" stroke="#555" stroke-width="0.8"/></svg>

<!-- NO combo + text -->
<div class="cb" style="left:299px;top:316px;width:64px;height:15.5px;border-color:#adadad"></div>
<div class="t dl" style="left:302px;top:320px;letter-spacing:-0.8px"><span class="l">NO:</span><span class="k">치수</span><span class="l"> </span><span class="k">표기</span><span class="l"> '</span></div>
<svg class="a" style="left:354.0px;top:322.5px" width="8" height="5"><path d="M0.5,0.8 L3.7,3.8 L6.9,0.8" fill="none" stroke="#555" stroke-width="0.8"/></svg>
<div class="cb" style="left:367px;top:316px;width:188.5px;height:15.5px;border-color:#adadad"></div>
<div class="t dl" style="left:369px;top:319px;font-size:7.5px;letter-spacing:-0.15px"><span class="l">NH150100ANC1**P31</span></div>
<div class="a" style="left:558px;top:316px;width:18.5px;height:15.5px;background:#cccccc;border:1px solid #c4c4c4"></div>
<div class="t" style="left:561.5px;top:319px;font-size:9px;color:#8a8a8a">&gt;&gt;</div>

<!-- Type groupbox -->
<div class="gb" style="left:423.5px;top:182px;width:154px;height:57px"></div>
<div class="a" style="left:428px;top:177px;width:19px;height:8px;background:#f0f0f0"></div>
<div class="t dl" style="left:429.5px;top:179px;font-size:8px;letter-spacing:-0.2px"><span class="l">Type</span></div>
<div class="a" style="left:429px;top:192px;width:141.5px;height:41.5px;background:#fff;border:1px solid #9a9a9a;border-right-color:#c8c8c8;border-bottom-color:#c8c8c8;box-shadow:inset 1px 1px 0 #d0d0d0"></div>
<div class="a" style="left:431px;top:193.5px;width:138px;height:8.5px;background:#3399ff"></div>
<div class="t dl" style="left:431.5px;top:194px;color:#fff;font-size:8px;letter-spacing:-0.8px"><span class="l">NH : </span><span class="k">세트품</span></div>
<div class="t dl" style="left:431.5px;top:202.5px;font-size:8px;letter-spacing:-0.8px"><span class="l">NAH : </span><span class="k">슬라이더</span><span class="l"> </span><span class="k">단품</span></div>
<div class="t dl" style="left:431.5px;top:211px;font-size:8px;letter-spacing:-0.8px"><span class="l">N1H : </span><span class="k">레일단품</span></div>

<!-- size groupbox -->
<div class="gb" style="left:423.5px;top:245px;width:154px;height:66px"></div>
<div class="dr" style="right:441px;top:255.2px"><span class="k">사이즈</span><span class="l"> :</span></div>
<div class="cb" style="left:522.5px;top:252.5px;width:48.5px;height:16px"></div>
<div class="t dl" style="left:525.5px;top:257.5px;font-size:7.5px;letter-spacing:0"><span class="l">15</span></div>
<svg class="a" style="left:562.0px;top:259.0px" width="8" height="5"><path d="M0.5,0.8 L3.7,3.8 L6.9,0.8" fill="none" stroke="#555" stroke-width="0.8"/></svg>
<div class="dr" style="right:441px;top:272.7px"><span class="k">레일</span><span class="l"> </span><span class="k">길이</span><span class="l"> :</span></div>
<div class="cb" style="left:522.5px;top:270px;width:48.5px;height:16px"></div>
<div class="t dl" style="left:524.5px;top:274.5px;font-size:7.5px;letter-spacing:0"><span class="l">100</span></div>
<div class="dr" style="right:441px;top:290.2px"><span class="k">슬라이더</span><span class="l"> </span><span class="k">타입</span><span class="l"> :</span></div>
<div class="cb" style="left:522.5px;top:287.5px;width:48.5px;height:16px"></div>
<div class="t dl" style="left:525px;top:291.5px;letter-spacing:-0.8px"><span class="l">AN:</span><span class="k">고하중</span></div>
<div class="a" style="left:557px;top:288.5px;width:13px;height:14px;background:#fff"></div>
<svg class="a" style="left:562.0px;top:294.0px" width="8" height="5"><path d="M0.5,0.8 L3.7,3.8 L6.9,0.8" fill="none" stroke="#555" stroke-width="0.8"/></svg>

<!-- tabs -->
<div class="a" style="left:299.5px;top:350px;width:277px;height:103.5px;background:#f0f0f0;border:1px solid #dadada;box-shadow:inset 1px 1px 0 #fff"></div>
<div class="a" style="left:365.5px;top:338px;width:63px;height:12.5px;background:#f0f0f0;border:1px solid #d9d9d9;border-bottom:none"></div>
<div class="a" style="left:428.5px;top:338px;width:63px;height:12.5px;background:#f0f0f0;border:1px solid #d9d9d9;border-bottom:none"></div>
<div class="a" style="left:299.5px;top:336px;width:66.5px;height:15.5px;background:#fff;border:1px solid #d9d9d9;border-bottom:none"></div>
<div class="t dl" style="left:325px;top:339px"><span class="k">옵션</span></div>
<div class="t dl" style="left:373.5px;top:340.5px"><span class="k">악세서리</span><span class="l"> </span><span class="k">옵션</span></div>
<div class="t dl" style="left:437.5px;top:340.5px"><span class="k">슬라이더</span><span class="l"> </span><span class="k">위치</span></div>

<!-- tab fields left -->
<div class="dr" style="right:578px;top:359.7px"><span class="k">재료</span><span class="l">, </span><span class="k">표면처리</span><span class="l"> :</span></div>
<div class="cb" style="left:385px;top:357px;width:50px;height:15.5px"></div>
<div class="t dl" style="left:387.5px;top:360.5px"><span class="l">C:</span><span class="k">특수고탄</span></div>
<div class="a" style="left:421px;top:358px;width:13px;height:13.5px;background:#fff"></div>
<svg class="a" style="left:426.0px;top:363.5px" width="8" height="5"><path d="M0.5,0.8 L3.7,3.8 L6.9,0.8" fill="none" stroke="#555" stroke-width="0.8"/></svg>
<div class="dr" style="right:578px;top:377.7px"><span class="k">정도</span><span class="l"> :</span></div>
<div class="cb" style="left:385px;top:375px;width:50px;height:15.5px"></div>
<div class="t dl" style="left:387.5px;top:379.5px;font-size:7.5px;letter-spacing:-0.1px"><span class="l">P3:</span></div>
<svg class="a" style="left:426.0px;top:381.5px" width="8" height="5"><path d="M0.5,0.8 L3.7,3.8 L6.9,0.8" fill="none" stroke="#555" stroke-width="0.8"/></svg>
<div class="dr" style="right:578px;top:396.2px"><span class="k">급유부품</span><span class="l"> :</span></div>
<div class="cb" style="left:385px;top:393.5px;width:50px;height:16px"></div>
<div class="t dl" style="left:387.5px;top:397.5px;font-size:7.5px;letter-spacing:-0.2px"><span class="l">Drive-in ty</span></div>
<div class="a" style="left:421px;top:394.5px;width:13px;height:14px;background:#fff"></div>
<svg class="a" style="left:426.0px;top:400.0px" width="8" height="5"><path d="M0.5,0.8 L3.7,3.8 L6.9,0.8" fill="none" stroke="#555" stroke-width="0.8"/></svg>
<div class="dr" style="right:578px;top:414.2px"><span class="l">G</span><span class="k">값</span><span class="l"> :</span></div>
<div class="cb" style="left:385px;top:411.5px;width:50px;height:16px"></div>

<!-- tab fields right -->
<div class="dr" style="right:442px;top:359.7px"><span class="k">슬라이더</span><span class="l"> </span><span class="k">개수</span><span class="l"> :</span></div>
<div class="cb" style="left:521.5px;top:357px;width:47.5px;height:15.5px"></div>
<div class="t dl" style="left:524.5px;top:361.5px;font-size:7.5px"><span class="l">1</span></div>
<svg class="a" style="left:560.0px;top:363.5px" width="8" height="5"><path d="M0.5,0.8 L3.7,3.8 L6.9,0.8" fill="none" stroke="#555" stroke-width="0.8"/></svg>
<div class="dr" style="right:442px;top:377.7px"><span class="k">예압</span><span class="l"> :</span></div>
<div class="cb" style="left:521.5px;top:375px;width:47.5px;height:15.5px"></div>
<div class="t dl" style="left:524.5px;top:379.5px;font-size:7.5px"><span class="l">1:</span></div>
<svg class="a" style="left:560.0px;top:381.5px" width="8" height="5"><path d="M0.5,0.8 L3.7,3.8 L6.9,0.8" fill="none" stroke="#555" stroke-width="0.8"/></svg>
<div class="dr" style="right:442px;top:396.2px"><span class="k">윤활유니트</span><span class="l"> (K1) :</span></div>
<div class="cb" style="left:521.5px;top:393.5px;width:47.5px;height:16px"></div>
<div class="t dl" style="left:524.5px;top:396.5px"><span class="k">무기호</span></div>
<svg class="a" style="left:560.0px;top:400.0px" width="8" height="5"><path d="M0.5,0.8 L3.7,3.8 L6.9,0.8" fill="none" stroke="#555" stroke-width="0.8"/></svg>

<!-- NSK logo box -->
<div class="a" style="left:299px;top:460px;width:136.5px;height:53.5px;background:#fff;border-top:1px solid #a0a0a0;border-left:1px solid #a0a0a0"></div>
<svg class="a" style="left:0;top:0" width="420" height="510"><g fill="#e2002a">
<path d="M331,474.8 L340,474.8 L346.5,485.8 L346.5,474.8 L354.3,474.8 L354.3,499.6 L346,499.6 L337.9,486.8 L337.9,499.6 L331,499.6 Z"/>
<path d="M361.4,474.8 L376.4,474.8 L376.4,481.8 L363.5,481.3 L363.5,482.7 L374.5,485.6 Q378.8,487 378.8,490 L378.8,495.5 Q378.8,499.6 374.5,499.6 L356.4,499.6 L356.4,491.8 L373,493.3 L373,491.9 L360.5,488.2 Q356.4,487 356.4,483.5 L356.4,479.5 Q356.4,474.8 361.4,474.8 Z"/>
<path d="M380.8,474.8 L387.7,474.8 L387.7,483.5 L394,474.8 L402.8,474.8 L396.1,484.5 L405.4,499.6 L395.2,499.6 L390.5,491 L387.7,494.5 L387.7,499.6 L380.8,499.6 Z"/>
</g></svg>

<!-- Draw option -->
<div class="gb" style="left:437.5px;top:464.5px;width:140px;height:48.5px"></div>
<div class="a" style="left:441.5px;top:460px;width:42px;height:9px;background:#f0f0f0"></div>
<div class="t dl" style="left:442.5px;top:461.5px;font-size:8px;letter-spacing:-0.3px"><span class="l">Draw Option</span></div>
<div class="a" style="left:447px;top:476px;width:9.5px;height:9.5px;background:#fff;border:1px solid #333"></div>
<div class="a" style="left:460.5px;top:474.5px;width:42px;height:14px;background:#cccccc"></div>
<div class="t" style="left:472px;top:477px;font-size:9px;color:#9a9a9a;letter-spacing:-0.6px">각도&nbsp; &lt;</div>
<div class="a" style="left:504px;top:474px;width:66.5px;height:15px;background:#f0f0f0;border:1px solid #d8d8d8"></div>
<div class="t" style="left:506px;top:477px;font-size:9px;color:#9a9a9a">0</div>
<div class="a" style="left:448.5px;top:492px;width:121.5px;height:15px;background:#e1e1e1;border:1px solid #adadad"></div>
<div class="t dl" style="left:498px;top:496px"><span class="k">옵</span><span class="l">&nbsp;&nbsp;&nbsp;&nbsp;</span><span class="k">션</span></div>

<!-- OK/Cancel -->
<div class="a" style="left:393px;top:523px;width:49.5px;height:14.5px;background:#e1e1e1;border:2px solid #0078d7"></div>
<div class="t dl" style="left:409px;top:526.5px"><span class="k">확인</span></div>
<div class="a" style="left:448px;top:523px;width:49px;height:14.5px;background:#e1e1e1;border:1px solid #adadad"></div>
<div class="t dl" style="left:464px;top:526.5px"><span class="k">취소</span></div>

<!-- status panel -->
<div class="a" style="left:297px;top:545.5px;width:281px;height:16px;border-top:1px solid #a0a0a0;border-left:1px solid #a0a0a0;border-right:1px solid #fff;border-bottom:1px solid #fff"></div>
<div class="a" style="left:402px;top:548px;width:54.5px;height:11.5px;background:#fff"></div>
<svg class="a" style="left:402px;top:548px" width="10" height="11"><circle cx="5" cy="5.5" r="2.8" fill="none" stroke="#e03080" stroke-width="2" stroke-dasharray="4.4 4.4"/><path d="M7.5,3.5 A2.8,2.8 0 0 0 2.4,4.3" fill="none" stroke="#f0b800" stroke-width="2"/><path d="M2.3,6.5 A2.8,2.8 0 0 0 5,8.3" fill="none" stroke="#2080d0" stroke-width="2"/></svg>
<div class="t" style="left:412px;top:549.5px;font-size:9px;font-weight:bold;color:#222;letter-spacing:-0.6px">CLICK</div>
<div class="t" style="left:436.5px;top:549.5px;font-size:9px;font-weight:bold;letter-spacing:-0.4px"><span style="color:#40b0e0">I</span><span style="color:#90c840">N</span><span style="color:#f070b0">F</span><span style="color:#f0d030">O</span></div>
<div class="a" style="left:633px;top:325px;width:244px;height:98.5px;border:1px solid #e8e8e8"></div>
<svg class="a" style="left:644px;top:334px" width="28" height="28"><circle cx="14.2" cy="14.2" r="11.3" fill="none" stroke="#ff1010" stroke-width="2.2"/></svg>
<div class="t" style="left:651.5px;top:337px;font-size:20.5px;font-weight:bold;color:#ff1010">6</div>
<div class="t" style="left:682px;top:337px;font-size:22px;font-weight:bold;color:#fff">상세 사양 선택</div>
<div class="t" style="left:644.5px;top:365px;font-size:22px;font-weight:bold;color:#fff">(세트품, 단품,</div>
<div class="t" style="left:647px;top:392.5px;font-size:22px;font-weight:bold;color:#fff">&nbsp;사이즈, 레일길이 등)</div>
<svg class="a" style="left:0;top:0" width="900" height="430"><g fill="none" stroke="#ff2020" stroke-width="1.4" stroke-linejoin="round"><path d="M652.5,388.5 L653.75,387.4 L655.00,388.5 L656.25,387.4 L657.50,388.5 L658.75,387.4 L660.00,388.5 L661.25,387.4 L662.50,388.5 L663.75,387.4 L665.00,388.5 L666.25,387.4 L667.50,388.5 L668.75,387.4 L670.00,388.5 L671.25,387.4 L672.50,388.5 L673.75,387.4 L675.00,388.5 L676.25,387.4 L677.50,388.5 L678.75,387.4 L680.00,388.5 L681.25,387.4 L682.50,388.5 L683.75,387.4 L685.00,388.5 L686.25,387.4 L687.50,388.5 L688.75,387.4 L690.00,388.5 L691.25,387.4 L692.50,388.5 L693.75,387.4 L695.00,388.5 L696.25,387.4 L697.50,388.5 L698.75,387.4 L700.00,388.5 L701.25,387.4 L702.50,388.5 L703.75,387.4 L705.00,388.5 L706.25,387.4 L707.50,388.5 L708.75,387.4 L710.00,388.5 L711.25,387.4 L712.50,388.5 L713.75,387.4 L715.00,388.5 L716.25,387.4 L717.50,388.5 L718.75,387.4"/><path d="M730.2,388.5 L731.45,387.4 L732.70,388.5 L733.95,387.4 L735.20,388.5 L736.45,387.4 L737.70,388.5 L738.95,387.4 L740.20,388.5 L741.45,387.4 L742.70,388.5 L743.95,387.4 L745.20,388.5 L746.45,387.4 L747.70,388.5 L748.95,387.4 L750.20,388.5 L751.45,387.4 L752.70,388.5 L753.95,387.4 L755.20,388.5 L756.45,387.4 L757.70,388.5 L758.95,387.4 L760.20,388.5 L761.45,387.4 L762.70,388.5 L763.95,387.4 L765.20,388.5 L766.45,387.4 L767.70,388.5 L768.95,387.4 L770.20,388.5 L771.45,387.4 L772.70,388.5"/><path d="M730.2,414.5 L731.45,413.4 L732.70,414.5 L733.95,413.4 L735.20,414.5 L736.45,413.4 L737.70,414.5 L738.95,413.4 L740.20,414.5 L741.45,413.4 L742.70,414.5 L743.95,413.4 L745.20,414.5 L746.45,413.4 L747.70,414.5 L748.95,413.4 L750.20,414.5 L751.45,413.4 L752.70,414.5 L753.95,413.4 L755.20,414.5 L756.45,413.4 L757.70,414.5 L758.95,413.4 L760.20,414.5 L761.45,413.4 L762.70,414.5 L763.95,413.4 L765.20,414.5 L766.45,413.4 L767.70,414.5 L768.95,413.4 L770.20,414.5 L771.45,413.4 L772.70,414.5 L773.95,413.4 L775.20,414.5 L776.45,413.4 L777.70,414.5 L778.95,413.4 L780.20,414.5 L781.45,413.4 L782.70,414.5 L783.95,413.4 L785.20,414.5 L786.45,413.4 L787.70,414.5 L788.95,413.4 L790.20,414.5 L791.45,413.4 L792.70,414.5 L793.95,413.4 L795.20,414.5 L796.45,413.4 L797.70,414.5 L798.95,413.4 L800.20,414.5 L801.45,413.4 L802.70,414.5 L803.95,413.4 L805.20,414.5 L806.45,413.4 L807.70,414.5 L808.95,413.4 L810.20,414.5 L811.45,413.4 L812.70,414.5 L813.95,413.4 L815.20,414.5 L816.45,413.4 L817.70,414.5"/></g></svg>
</body></html>
